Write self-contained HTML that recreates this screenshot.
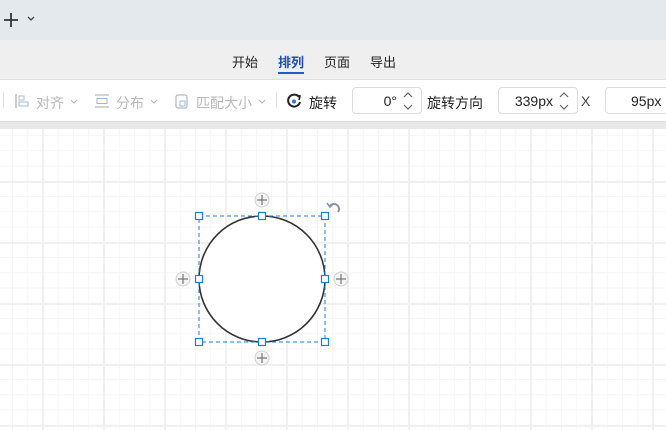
<!DOCTYPE html>
<html><head><meta charset="utf-8"><style>
*{margin:0;padding:0;box-sizing:border-box}
body{width:666px;height:430px;overflow:hidden;font-family:"Liberation Sans","Noto Sans CJK SC",sans-serif;background:#fff;position:relative}
.top{position:absolute;left:0;top:0;width:666px;height:40px;background:#e3e9ed}
.tabs{position:absolute;left:0;top:40px;width:666px;height:40px;background:#efefef;border-bottom:1px solid #e0e0e0}
.tab{position:absolute;top:12px;font-size:13px;color:#222}
.tb{position:absolute;left:0;top:80px;width:666px;height:41px;background:#fff}
.strip{position:absolute;left:0;top:121px;width:666px;height:8px;background:#e8e8e8;border-top:1px solid #dadada}
.canvas{position:absolute;left:0;top:129px;width:666px;height:301px;
background-image:
linear-gradient(to right,#f0f0f0 2px,transparent 2px),
linear-gradient(to bottom,#f0f0f0 2px,transparent 2px),
linear-gradient(to right,#f6f6f6 1px,transparent 1px),
linear-gradient(to bottom,#f6f6f6 1px,transparent 1px);
background-size:61px 61px,61px 61px,15.25px 15.25px,15.25px 15.25px;
background-position:42px 52px,42px 52px,12px 6px,12px 6px}
.t{position:absolute;font-size:13px;white-space:nowrap}
.g{color:#b8b8b8}
.inp{position:absolute;top:7px;height:27px;border:1px solid #dcdcdc;border-radius:4px;background:#fff;font-size:14px;color:#222}
</style></head><body>
<div class="top">
<svg style="position:absolute;left:3px;top:12px" width="16" height="16"><path d="M8 1v14M1 8h14" stroke="#333" stroke-width="1.8"/></svg>
<svg style="position:absolute;left:27px;top:16px" width="8" height="6"><path d="M1 1l3 3 3-3" stroke="#444" stroke-width="1.3" fill="none"/></svg>
</div>
<div class="tabs">
<span class="tab" style="left:232px">开始</span>
<span class="tab" style="left:278px;color:#1d4fb3;font-weight:bold">排列</span>
<div style="position:absolute;left:278px;top:32px;width:26px;height:2px;background:#1d5fd1"></div>
<span class="tab" style="left:324px">页面</span>
<span class="tab" style="left:370px">导出</span>
</div>
<div class="tb">
<div style="position:absolute;left:3px;top:12px;width:1px;height:16px;background:#ddd"></div>
<svg style="position:absolute;left:14px;top:13px" width="16" height="16"><path d="M2 1v14" stroke="#bbb" stroke-width="1.5"/><rect x="5" y="3" width="5" height="4" fill="none" stroke="#bbb"/><rect x="5" y="9" width="9" height="4" fill="none" stroke="#9ab8e0"/></svg>
<span class="t g" style="left:36px;top:13px;font-size:14px">对齐</span>
<svg style="position:absolute;left:70px;top:19px" width="8" height="6"><path d="M1 1l3 3 3-3" stroke="#bbb" stroke-width="1.2" fill="none"/></svg>
<svg style="position:absolute;left:94px;top:13px" width="16" height="16"><path d="M1 2h14M1 14h14" stroke="#bbb" stroke-width="1.3"/><rect x="3" y="5.5" width="10" height="5" fill="none" stroke="#9ab8e0"/></svg>
<span class="t g" style="left:116px;top:13px;font-size:14px">分布</span>
<svg style="position:absolute;left:150px;top:19px" width="8" height="6"><path d="M1 1l3 3 3-3" stroke="#bbb" stroke-width="1.2" fill="none"/></svg>
<svg style="position:absolute;left:175px;top:13px" width="14" height="16"><rect x="1" y="2" width="11" height="13" rx="2" fill="none" stroke="#bbb" stroke-width="1.3"/><rect x="5" y="8" width="5" height="5" fill="none" stroke="#9ab8e0"/></svg>
<span class="t g" style="left:196px;top:13px;font-size:14px">匹配大小</span>
<svg style="position:absolute;left:258px;top:19px" width="8" height="6"><path d="M1 1l3 3 3-3" stroke="#bbb" stroke-width="1.2" fill="none"/></svg>
<div style="position:absolute;left:276px;top:12px;width:1px;height:16px;background:#ddd"></div>
<svg style="position:absolute;left:286px;top:13px" width="16" height="16"><path d="M13 4A6 6 0 1 0 14 9" stroke="#222" stroke-width="2" fill="none"/><path d="M10 2l4 1-1 4" stroke="#222" stroke-width="1.6" fill="none"/><circle cx="8" cy="8.5" r="2" fill="#2d6fd6"/></svg>
<span class="t" style="left:309px;top:13px;color:#222;font-size:14px">旋转</span>
<div class="inp" style="left:352px;width:70px"><span style="position:absolute;right:24px;top:5px">0°</span><svg style="position:absolute;right:8px;top:3px" width="10" height="20"><path d="M1 6l4-4 4 4M1 14l4 4 4-4" stroke="#666" stroke-width="1.2" fill="none"/></svg></div>
<span class="t" style="left:427px;top:13px;color:#222;font-size:14px">旋转方向</span>
<div class="inp" style="left:498px;width:80px"><span style="position:absolute;right:24px;top:5px">339px</span><svg style="position:absolute;right:8px;top:3px" width="10" height="20"><path d="M1 6l4-4 4 4M1 14l4 4 4-4" stroke="#666" stroke-width="1.2" fill="none"/></svg></div>
<span class="t" style="left:581px;top:13px;color:#444;font-size:14px">X</span>
<div class="inp" style="left:605px;width:70px"><span style="position:absolute;left:25px;top:5px">95px</span></div>
</div>
<div class="strip"></div>
<div class="canvas"></div>
<svg style="position:absolute;left:0;top:0" width="666" height="430">
<circle cx="262" cy="279" r="63" fill="#fff" stroke="#333" stroke-width="1.6"/>
<rect x="199" y="216" width="126" height="126" fill="none" stroke="#1a7ee0" stroke-width="1" stroke-dasharray="4 3"/>
<g fill="#fff" stroke="#1a7ee0" stroke-width="1.2">
<rect x="195.5" y="212.5" width="7" height="7"/><rect x="258.5" y="212.5" width="7" height="7"/><rect x="321.5" y="212.5" width="7" height="7"/>
<rect x="195.5" y="275.5" width="7" height="7"/><rect x="321.5" y="275.5" width="7" height="7"/>
<rect x="195.5" y="338.5" width="7" height="7"/><rect x="258.5" y="338.5" width="7" height="7"/><rect x="321.5" y="338.5" width="7" height="7"/>
</g>
<g fill="#f4f4f4" stroke="#d0d0d0">
<circle cx="262" cy="200" r="7"/><circle cx="262" cy="358" r="7"/><circle cx="183" cy="279" r="7"/><circle cx="341" cy="279" r="7"/>
</g>
<g stroke="#777" stroke-width="1.2">
<path d="M257 200h10M262 195v10M257 358h10M262 353v10M178 279h10M183 274v10M336 279h10M341 274v10"/>
</g>
<path d="M330 206a5 5 0 1 1 8 6" stroke="#8a93a6" stroke-width="2" fill="none"/>
<path d="M327 203l3 4 3-3" stroke="#8a93a6" stroke-width="1.6" fill="none"/>
</svg>
</body></html>
